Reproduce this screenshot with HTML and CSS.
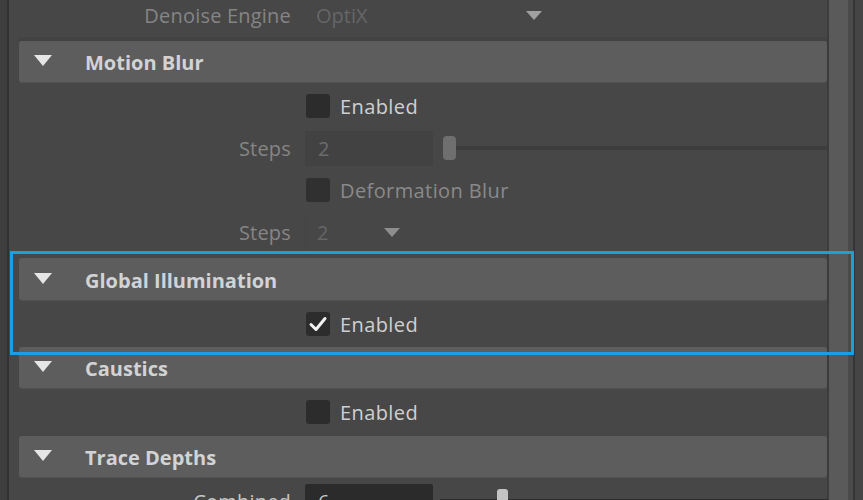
FILE: index.html
```html
<!DOCTYPE html>
<html>
<head>
<meta charset="utf-8">
<link rel="stylesheet" href="styles.css">
</head>
<body>
<div class="window">
  <div class="leftstrip"></div>
  <div class="main">
    <div class="row row-cut">
      <div class="label">Denoise Engine</div>
      <div class="dropdown wide">
        <span class="dd-value dim">OptiX</span>
        <span class="dd-arrow"></span>
      </div>
    </div>

    <div class="header first"><span class="tri"></span><span class="htext">Motion Blur</span></div>
    <div class="row">
      <div class="label"></div>
      <div class="check"><span class="box"></span><span class="ctext">Enabled</span></div>
    </div>
    <div class="row">
      <div class="label">Steps</div>
      <div class="field disabled">2</div>
      <div class="slider disabled"><span class="handle"></span><span class="rail"></span></div>
    </div>
    <div class="row">
      <div class="label"></div>
      <div class="check disabled"><span class="box"></span><span class="ctext">Deformation Blur</span></div>
    </div>
    <div class="row">
      <div class="label">Steps</div>
      <div class="dropdown narrow">
        <span class="dd-value dim">2</span>
        <span class="dd-arrow"></span>
      </div>
    </div>

    <div class="header gi"><span class="tri"></span><span class="htext">Global Illumination</span></div>
    <div class="row">
      <div class="label"></div>
      <div class="check"><span class="box checked"><svg viewBox="0 0 24 24" width="24" height="24"><polyline points="5,12.5 10,17.5 19,6.5" fill="none" stroke="#f2f2f2" stroke-width="3" stroke-linecap="round" stroke-linejoin="round"/></svg></span><span class="ctext">Enabled</span></div>
    </div>

    <div class="header tight"><span class="tri"></span><span class="htext">Caustics</span></div>
    <div class="row">
      <div class="label"></div>
      <div class="check"><span class="box"></span><span class="ctext">Enabled</span></div>
    </div>

    <div class="header"><span class="tri"></span><span class="htext">Trace Depths</span></div>
    <div class="row">
      <div class="label bright">Combined</div>
      <div class="field active">6</div>
      <div class="slider active"><span class="rail"></span><span class="handle"></span></div>
    </div>
  </div>
  <div class="scrollzone">
    <div class="sb-line"></div>
    <div class="sb-track"></div>
    <div class="sb-gap"></div>
    <div class="sb-edge"></div>
    <div class="sb-rest"></div>
  </div>
  <div class="highlight"></div>
</div>
</body>
</html>
```

FILE: styles.css
```css
html, body {
  margin: 0;
  padding: 0;
  background: #474747;
}
body {
  font-family: "Open Sans", "Noto Sans", sans-serif;
  font-size: 20px;
  color: #cfcfcf;
}
.window {
  position: relative;
  width: 863px;
  height: 500px;
  overflow: hidden;
  display: flex;
  background: #474747;
}
.leftstrip {
  width: 7px;
  flex: none;
  background: #3e3e3e;
  border-right: 2px solid #313131;
}
.main {
  flex: 1;
  display: flex;
  flex-direction: column;
  padding-left: 10px;
  min-width: 0;
}
.row {
  height: 42px;
  flex: none;
  display: flex;
  align-items: center;
}
.row-cut {
  height: 30px;
  padding-bottom: 7px;
  box-sizing: content-box;
  border-bottom: 4px solid #424242;
}
.label {
  width: 282px;
  margin-left: -10px;
  flex: none;
  text-align: right;
  color: #858585;
  letter-spacing: 0.2px;
  margin-right: 14px;
}
.label.bright { color: #c8c8c8; }
.header {
  height: 41px;
  flex: none;
  margin-top: 3px;
  background: #5d5d5d;
  border-radius: 3px;
  display: flex;
  align-items: center;
  box-shadow: 0 1px 0 #525252;
  margin-bottom: 3px;
}
.header.first { margin-top: 0; }
.header.gi { margin-top: 5px; height: 42px; }
.header.tight { margin-top: 2px; }
.tri {
  width: 0;
  height: 0;
  margin-left: 15px;
  border-left: 9px solid transparent;
  border-right: 9px solid transparent;
  border-top: 11px solid #e6e6e6;
  margin-top: -2px;
}
.htext {
  margin-left: 33px;
  font-weight: 700;
  color: #d2d3d5;
  margin-top: 2px;
}
.check {
  display: flex;
  align-items: center;
  margin-left: 1px;
}
.box {
  width: 24px;
  height: 24px;
  border-radius: 3px;
  background: #2c2c2c;
  display: block;
}
.box svg { display: block; }
.ctext {
  margin-left: 10px;
  color: #d0d0d0;
  letter-spacing: 0.4px;
}
.check.disabled .ctext { color: #8a8a8a; }
.check.disabled .box { background: #303030; }
.field {
  width: 128px;
  height: 35px;
  box-sizing: border-box;
  border-radius: 2px;
  padding-left: 13px;
  display: flex;
  align-items: center;
  flex: none;
}
.field.disabled { background: #424242; color: #6c6c6c; }
.field.active { background: #2b2b2b; color: #c8c8c8; }
.slider {
  flex: 1;
  display: flex;
  align-items: center;
  margin-left: 10px;
  margin-right: -1px;
  height: 24px;
}
.slider .rail {
  flex: 1;
  height: 4px;
}
.slider .handle {
  width: 13px;
  height: 24px;
  border-radius: 4px;
  flex: none;
}
.slider.disabled .handle { background: #6f6f6f; }
.slider.disabled .rail { background: #3d3d3d; }
.slider.active {
  position: relative;
  margin-left: 7px;
}
.slider.active .rail { background: #2c2c2c; }
.slider.active .handle {
  position: absolute;
  left: 57px;
  top: 0;
  width: 11px;
  border-radius: 3px;
  background: #c4c4c4;
}
.dropdown {
  display: flex;
  align-items: center;
  height: 36px;
  flex: none;
}
.dropdown.wide { width: 244px; }
.dropdown.narrow { width: 96px; border-left: 1px solid #444444; }
.dd-value {
  margin-left: 11px;
  flex: 1;
}
.dim { color: #666666; }
.dd-arrow {
  width: 0;
  height: 0;
  border-left: 8px solid transparent;
  border-right: 8px solid transparent;
  border-top: 9px solid #9a9a9a;
}
.dropdown.wide .dd-arrow { margin-right: 7px; border-top-color: #a0a0a0; }
.dropdown.narrow .dd-arrow { margin-right: 2px; border-top-color: #8e8e8e; }
.scrollzone {
  flex: none;
  display: flex;
  width: 36px;
}
.sb-line { width: 2px; background: #3c3c3c; }
.sb-track { width: 19px; background: #5a5a5a; }
.sb-gap { width: 5px; background: #4a4a4a; }
.sb-edge { width: 2px; background: #353535; }
.sb-rest { flex: 1; background: #454545; }
.highlight {
  position: absolute;
  left: 10px;
  top: 251px;
  width: 844px;
  height: 104px;
  box-sizing: border-box;
  border: 3px solid #1a9fe0;
  pointer-events: none;
}
```
